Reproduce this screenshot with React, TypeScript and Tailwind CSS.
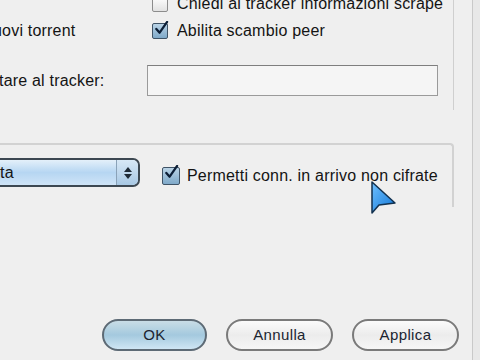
import React from 'react';

const Check = ({ checked, size = 16 }: { checked?: boolean; size?: number }) => (
  <div
    className={`relative shrink-0 rounded-[2px] border ${
      checked
        ? 'border-[#3f5366] bg-gradient-to-b from-[#b9d3e6] to-[#7fa9c9]'
        : 'border-[#8c8c8c] bg-gradient-to-b from-[#ffffff] to-[#e2e2e2]'
    }`}
    style={{ width: size, height: size }}
  >
    {checked && (
      <svg viewBox="0 0 16 16" className="absolute left-[1px] -top-[3px] w-[15px] h-[15px]">
        <path d="M2.5 8.5 L6 12.5 L14 1" fill="none" stroke="#0c1e36" strokeWidth="2.4" strokeLinecap="round" strokeLinejoin="round" />
      </svg>
    )}
  </div>
);

const Button = ({ label, primary }: { label: string; primary?: boolean }) => (
  <button
    className={`h-[32px] rounded-full border-2 text-[15px] tracking-wide text-[#1b2430] ${
      primary
        ? 'w-[105px] border-[#5d6a75] bg-gradient-to-b from-[#c9dde6] via-[#a4c9de] to-[#cfe6f4]'
        : 'w-[107px] border-[#7a7a7a] bg-gradient-to-b from-[#fbfbfb] via-[#ececec] to-[#f6f6f6]'
    }`}
  >
    {label}
  </button>
);

export default function App() {
  return (
    <div className="relative w-[480px] h-[360px] overflow-hidden bg-[#efefef] flex font-['Liberation_Sans',Arial,sans-serif] text-[16px] tracking-[0.2px] text-[#141414]">
      <div className="w-[472px] flex flex-col">
        <div className="w-[454px] h-[110px] border-r border-[#cfcfcf] flex flex-col">
          <div className="-mt-[6px] h-[20px] flex items-center">
            <div className="w-[152px]" />
            <Check />
            <span className="ml-[9px] whitespace-nowrap">Chiedi al tracker informazioni scrape</span>
          </div>
          <div className="mt-[7px] h-[20px] flex items-center">
            <div className="w-[152px] overflow-hidden whitespace-nowrap">
              <span className="-ml-[7px] inline-block">uovi torrent</span>
            </div>
            <Check checked />
            <span className="ml-[9px] whitespace-nowrap">Abilita scambio peer</span>
          </div>
          <div className="mt-[24px] h-[31px] flex items-center">
            <div className="w-[147px] overflow-hidden whitespace-nowrap">
              <span className="-ml-[1px] inline-block">tare al tracker:</span>
            </div>
            <div className="w-[291px] h-[31px] border border-[#9a9a9a] border-t-[#7e7e7e] bg-[#f5f5f5]" />
          </div>
        </div>

        <div className="mt-[33px] w-[454px] h-[64px] border-t-2 border-r-2 border-[#d2d2d2] rounded-tr-[4px] flex items-start">
          <div className="mt-[13px] -ml-[8px] w-[148px] h-[29px] rounded-[7px] border-2 border-[#3d4852] bg-gradient-to-b from-[#e4f0fa] via-[#b6d6f2] to-[#cfe4f7] flex items-center">
            <span className="ml-[6px] flex-1">ta</span>
            <div className="w-[22px] h-full border-l border-[#8aa2b8] flex flex-col items-center justify-center gap-[2px] bg-gradient-to-b from-[#d7e8f6] to-[#a8c8e4] rounded-r-[6px]">
              <svg viewBox="0 0 8 5" className="w-[8px] h-[5px]"><path d="M4 0 L8 5 L0 5 Z" fill="#1e2a36" /></svg>
              <svg viewBox="0 0 8 5" className="w-[8px] h-[5px]"><path d="M0 0 L8 0 L4 5 Z" fill="#1e2a36" /></svg>
            </div>
          </div>
          <div className="mt-[19px] ml-[22px] flex items-center">
            <Check checked size={18} />
            <span className="ml-[7px] whitespace-nowrap">Permetti conn. in arrivo non cifrate</span>
          </div>
        </div>

        <div className="mt-[112px] ml-[102px] flex gap-[19px]">
          <Button label="OK" primary />
          <Button label="Annulla" />
          <Button label="Applica" />
        </div>
      </div>
      <div className="w-px bg-[#c9c9c9]" />
      <div className="flex-1 bg-[#e8e8e8]" />

      <svg viewBox="0 0 26 34" className="absolute left-[370px] top-[181px] w-[26px] h-[34px]">
        <defs>
          <linearGradient id="cur" x1="0" y1="0" x2="1" y2="1">
            <stop offset="0" stopColor="#6fc0ff" />
            <stop offset="1" stopColor="#1176d6" />
          </linearGradient>
        </defs>
        <path d="M2 1 L2 32 L9 24 L25 22 Z" fill="url(#cur)" stroke="#12314f" strokeWidth="1.5" strokeLinejoin="round" />
      </svg>
    </div>
  );
}
